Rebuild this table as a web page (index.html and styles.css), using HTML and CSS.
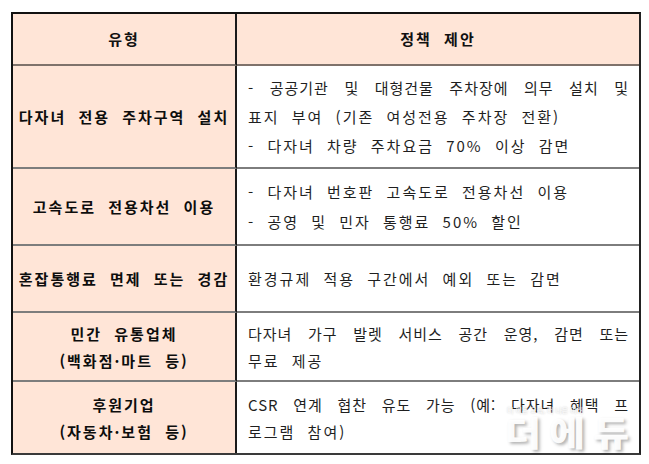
FILE: index.html
```html
<!DOCTYPE html>
<html lang="ko">
<head>
<meta charset="utf-8">
<title>다자녀 정책 제안</title>
<link rel="stylesheet" href="styles.css">
</head>
<body>
<div class="sheet">
  <div class="grid">
    <div class="cell head left">유형</div>
    <div class="cell head right">정책 제안</div>

    <div class="cell kind">다자녀 전용 주차구역 설치</div>
    <div class="cell body lh1">
      <span class="line just">- 공공기관 및 대형건물 주차장에 의무 설치 및</span>
      <span class="line">표지 부여 (기존 여성전용 주차장 전환)</span>
      <span class="line">- 다자녀 차량 주차요금 70% 이상 감면</span>
    </div>

    <div class="cell kind">고속도로 전용차선 이용</div>
    <div class="cell body lh2">
      <span class="line">- 다자녀 번호판 고속도로 전용차선 이용</span>
      <span class="line">- 공영 및 민자 통행료 50% 할인</span>
    </div>

    <div class="cell kind">혼잡통행료 면제 또는 경감</div>
    <div class="cell body">
      <span class="line">환경규제 적용 구간에서 예외 또는 감면</span>
    </div>

    <div class="cell kind lh3">
      <span class="line">민간 유통업체</span>
      <span class="line">(백화점·마트 등)</span>
    </div>
    <div class="cell body lh3">
      <span class="line just">다자녀 가구 발렛 서비스 공간 운영, 감면 또는</span>
      <span class="line">무료 제공</span>
    </div>

    <div class="cell kind last lh3">
      <span class="line">후원기업</span>
      <span class="line">(자동차·보험 등)</span>
    </div>
    <div class="cell body last lh3">
      <span class="line just">CSR 연계 협찬 유도 가능 (예: 다자녀 혜택 프</span>
      <span class="line">로그램 참여)</span>
    </div>
  </div>
  <div class="mark">
    <span class="mark-tag">더 이은 교육, 더 나은 미래</span>
    <span class="mark-name">더에듀</span>
  </div>
</div>
</body>
</html>
```

FILE: styles.css
```css
* { box-sizing: border-box; }

html, body {
  margin: 0;
  padding: 0;
  background: #ffffff;
}

body {
  font-family: "Noto Sans CJK KR", "Noto Sans", sans-serif;
  color: #222;
}

.sheet {
  position: relative;
  width: 649px;
  height: 464px;
  padding: 12px 0 0 11px;
}

.grid {
  display: grid;
  width: 630px;
  height: 443px;
  grid-template-columns: 224px 1fr;
  grid-template-rows: 52px 103px 77px 67px 69px 71px;
  border-top: 2px solid #111;
  border-left: 2px solid #111;
  border-right: 2px solid #222;
  border-bottom: 2px solid #3a3a3a;
  background: #ffffff;
}

.cell {
  display: flex;
  flex-direction: column;
  justify-content: center;
  border-bottom: 2px solid #7d7d7d;
  font-size: 15px;
  line-height: 28px;
  letter-spacing: 2px;
  word-spacing: 6px;
}

.cell.last { border-bottom: none; }

.head {
  background: #ffe5d7;
  font-weight: 700;
  color: #111;
  align-items: center;
  text-align: center;
  border-bottom-color: #7f726b;
}

.head.left, .kind { border-right: 2px solid #1a1a1a; }

.kind {
  background: #ffe5d7;
  font-weight: 700;
  color: #0d0d0d;
  align-items: center;
  text-align: center;
}

.body {
  padding: 0 10px 0 11px;
  color: #1f1f1f;
}

.line { display: block; white-space: nowrap; }

.just {
  text-align: justify;
  text-align-last: justify;
  letter-spacing: 1px;
  word-spacing: 0;
}

.lh1 { line-height: 29px; }
.lh2 { line-height: 30px; }
.lh3 { line-height: 27px; }

.mark {
  position: absolute;
  left: 505px;
  top: 406px;
  display: flex;
  flex-direction: column;
  align-items: flex-start;
}

.mark-tag {
  font-size: 7px;
  line-height: 8px;
  color: rgba(255, 255, 255, 0.95);
  text-shadow: 0 0 2px rgba(0, 0, 0, 0.3);
  padding-left: 2px;
}

.mark-name {
  display: inline-block;
  font-size: 34px;
  line-height: 36px;
  font-weight: 900;
  letter-spacing: 7px;
  color: rgba(255, 255, 255, 0.96);
  text-shadow: 2px 2px 3px rgba(0, 0, 0, 0.3);
  transform: scaleX(1.15);
  transform-origin: left center;
}
```
